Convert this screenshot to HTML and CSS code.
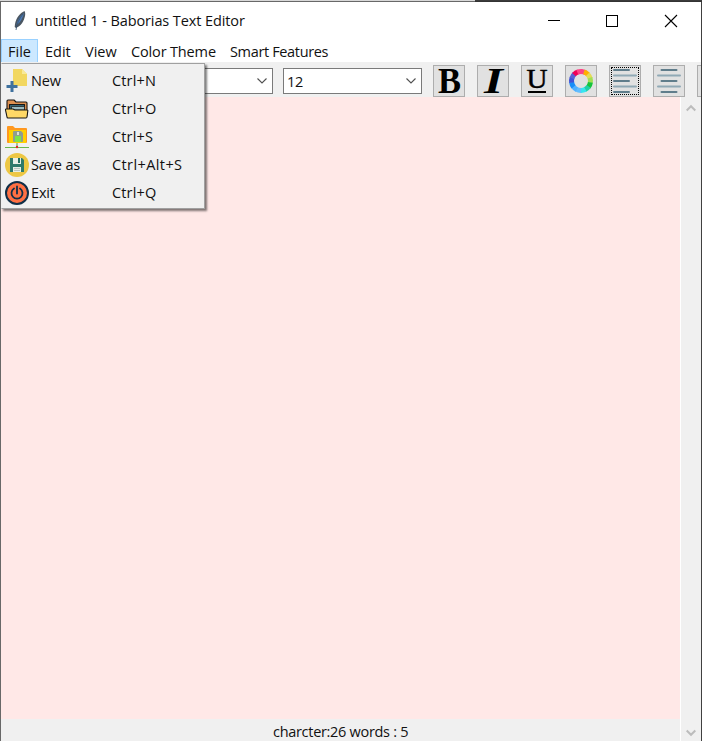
FILE: index.html
```html
<!DOCTYPE html>
<html lang="en">
<head>
<meta charset="utf-8">
<title>untitled 1 - Baborias Text Editor</title>
<link rel="stylesheet" href="styles.css">
</head>
<body>
<div class="window">
  <header class="titlebar">
    <svg class="feather" width="14" height="20" viewBox="0 0 14 20"><path d="M11.5 0C7 2 3 7 2 13l-.3 3L3 17c5-2 8-7 9-12 .4-2 .2-4-.5-5z" fill="#4a5662"/><path d="M11 2C7 5 4 10 3.500 14 8 11 10 6 11 2z" fill="#4b7ab5"/><path d="M10 3C6 8 4 12 3 19" stroke="#35506f" stroke-width=".8" fill="none"/></svg>
    <span class="title">untitled 1 - Baborias Text Editor</span>
    <svg class="controls" width="130" height="14" viewBox="0 0 130 14" fill="none" stroke="#000" shape-rendering="crispEdges"><path d="M0 6.500h12M58.500 1.500h11v11h-11z"/><path d="M117 1l12 12M129 1l-12 12" shape-rendering="auto" stroke-width="1.100"/></svg>
  </header>
  <nav class="menubar">
    <span class="active m-file">File</span><span class="m-edit">Edit</span><span class="m-view">View</span><span class="m-color">Color Theme</span><span class="m-smart">Smart Features</span>
  </nav>
  <div class="toolbar">
    <div class="combo font"><svg width="10" height="6" viewBox="0 0 10 6"><path d="M.5.5 5 5 9.500.5"/></svg></div>
    <div class="combo size"><span>12</span><svg width="10" height="6" viewBox="0 0 10 6"><path d="M.5.5 5 5 9.500.5"/></svg></div>
    <div class="tools">
      <button><svg viewBox="0 0 30 30"><text class="glyph bold" x="4" y="27" textLength="23" lengthAdjust="spacingAndGlyphs">B</text></svg></button>
      <button><svg viewBox="0 0 30 30"><text class="glyph italic" x="6" y="27" textLength="19" lengthAdjust="spacingAndGlyphs">I</text></svg></button>
      <button><svg viewBox="0 0 30 30"><text class="glyph underline" x="4.500" y="22" textLength="21" lengthAdjust="spacingAndGlyphs">U</text><path d="M6 26h18" stroke="#000" stroke-width="2"/></svg></button>
      <button><svg viewBox="0 0 30 30"><g fill="none" stroke-width="5" transform="rotate(-90 15 15)"><g stroke-dasharray="5.100 55">
        <circle cx="15" cy="15" r="9.500" stroke="#f74b86"/><circle cx="15" cy="15" r="9.500" stroke="#ffb000" transform="rotate(18 15 15)"/><circle cx="15" cy="15" r="9.500" stroke="#e4dc55" transform="rotate(45 15 15)"/><circle cx="15" cy="15" r="9.500" stroke="#a2df55" transform="rotate(70 15 15)"/><circle cx="15" cy="15" r="9.500" stroke="#16c43c" transform="rotate(98 15 15)"/><circle cx="15" cy="15" r="9.500" stroke="#20d0a5" transform="rotate(126 15 15)"/><circle cx="15" cy="15" r="9.500" stroke="#38e4ef" transform="rotate(152 15 15)"/><circle cx="15" cy="15" r="9.500" stroke="#62bdff" transform="rotate(180 15 15)"/><circle cx="15" cy="15" r="9.500" stroke="#4eb0ff" transform="rotate(206 15 15)"/><circle cx="15" cy="15" r="9.500" stroke="#188df8" transform="rotate(232 15 15)"/><circle cx="15" cy="15" r="9.500" stroke="#4052d7" transform="rotate(260 15 15)"/><circle cx="15" cy="15" r="9.500" stroke="#5861d5" transform="rotate(287 15 15)"/><circle cx="15" cy="15" r="9.500" stroke="#f00056" transform="rotate(312 15 15)"/><circle cx="15" cy="15" r="9.500" stroke="#ff4387" transform="rotate(337 15 15)"/></g></g></svg></button>
      <button class="focused"><svg viewBox="0 0 30 30"><path class="dark" d="M4 4h15M4 15h15M4 26h15"/><path class="light" d="M4 9.500h22M4 20.500h22"/></svg></button>
      <button><svg viewBox="0 0 30 30"><path class="dark" d="M7.500 4h15M7.500 15h15M7.500 26h15"/><path class="light" d="M4 9.500h22M4 20.500h22"/></svg></button>
      <button></button>
    </div>
  </div>
  <div class="workspace">
    <main class="document"><div class="page"></div><footer><span>charcter:26 words : 5</span></footer></main>
    <div class="scrollbar"><svg width="10" height="8" viewBox="0 0 10 8"><path d="M.7 6.500 5 2.200l4.300 4.300"/></svg><svg width="10" height="8" viewBox="0 0 10 8"><path d="M.7 1.500 5 5.800l4.300-4.300"/></svg></div>
  </div>
  <div class="dropdown">
    <div class="item"><svg viewBox="0 0 24 24"><path d="M8 0h9l5 5v12H8z" fill="#f2d760"/><path d="M17 0v5h5z" fill="#f8e99a"/><path d="M7 12v11M1.500 17.500h11" stroke="#3f719e" stroke-width="3"/></svg><span>New</span><kbd>Ctrl+N</kbd></div>
    <div class="item"><svg viewBox="0 0 24 24"><g stroke="#181715" stroke-width="1.100" stroke-linejoin="round"><path d="M2 17V4q0-1 1-1h6l2 2h10q1 0 1 1v12z" fill="#df9150"/><path d="M4.500 13V7.500h15V13z" fill="#376573"/><path d="M6.500 13V9.500h13V13z" fill="#9ebdc2" stroke-width=".7"/><path d="M1 12h7l2 1h12q1 0 .8 1L22 20q-.2 1-1 1H3q-1 0-1-1L.5 13q-.2-1 .5-1z" fill="#ffd866"/></g></svg><span>Open</span><kbd>Ctrl+O</kbd></div>
    <div class="item"><svg viewBox="0 0 24 24"><path d="M2 17V2q0-1 1-1h5l2 2h11q1 0 1 1v13q0 1-1 1H3q-1 0-1-1z" fill="#ff981f"/><path d="M4 5h17v13H4z" fill="#ffd000"/><path d="M8 7q0-1 1-1h7l2 2v8q0 1-1 1H9q-1 0-1-1z" fill="#8f9d91"/><path d="M10 11h6v6h-6z" fill="#7ce34b"/><path d="M12 7h2v3h-2z" fill="#d8e2d6"/><path d="M0 22.500h24" stroke="#69b84d"/><path d="M12 18v3" stroke="#5c9f45"/><circle cx="12" cy="22" r="1.200" fill="#e82b20"/></svg><span>Save</span><kbd>Ctrl+S</kbd></div>
    <div class="item"><svg viewBox="0 0 24 24"><circle cx="12" cy="12" r="12" fill="#edc744"/><path d="M5 5h12l2 2v12H5z" fill="#2f7a6b"/><path d="M8 5h8v6H8zM8 14h8v5H8z" fill="#e8eee6"/><path d="M13 5h2v5h-2z" fill="#226e60"/><path d="M9 15.500h6M9 17.500h6" stroke="#a5b4ae" stroke-width=".7"/></svg><span>Save as</span><kbd class="wide">Ctrl+Alt+S</kbd></div>
    <div class="item"><svg viewBox="0 0 24 24"><circle cx="12" cy="12" r="11" fill="#ff7043" stroke="#102f48" stroke-width="2"/><path d="M9 7.500a5.500 5.500 0 1 0 6 0M12 5.500v7" fill="none" stroke="#102f48" stroke-width="1.800" stroke-linecap="round"/></svg><span>Exit</span><kbd>Ctrl+Q</kbd></div>
  </div>
</div>
</body>
</html>
```
FILE: styles.css
```css
* { box-sizing: border-box; }
body { margin: 0; overflow: hidden; color: #111; font: 14.5px/20px "Open Sans", "Noto Sans", sans-serif; }
.window { position: relative; width: 702px; height: 741px; padding: 2px 1px 0; overflow: hidden; background: linear-gradient(90deg, #686868 0 1px, #fff 1px 701px, #404040 701px); display: flex; flex-direction: column; }
.window::before { content: ""; position: absolute; inset: 0 0 auto; height: 2px; background: linear-gradient(90deg, #d8d8d8 0 475px, #3b3b3b 475px) 0 0 / 100% 1px no-repeat, linear-gradient(90deg, #686868 0 475px, #333 475px); }
.titlebar { height: 37px; flex: none; display: flex; align-items: center; padding: 0 23px 0 12px; background: #fff; }
.feather { margin-right: 8px; }
.title { white-space: nowrap; letter-spacing: -.1px; }
.controls { margin-left: auto; }
.menubar { height: 23px; flex: none; display: flex; background: #fff; white-space: nowrap; }
.menubar span { padding: 3px 0 0 7px; height: 24px; }
.menubar .active { border: 1px solid #99d1ff; background: #cce8ff; padding: 2px 0 0 6px; }
.m-file { width: 37px; }
.m-edit { width: 40px; }
.m-view { width: 46px; }
.m-color { width: 99px; letter-spacing: -.15px; }
.m-smart { letter-spacing: -.35px; }
.toolbar { height: 35px; flex: none; display: flex; background: #f0f0f0; padding: 3px 0 0 132px; overflow: hidden; }
.combo { height: 26px; margin-top: 3px; border: 1px solid #7a7a7a; background: #fff; display: flex; align-items: center; justify-content: flex-end; padding: 0 5px 0 3px; flex: none; }
.combo.font { width: 140px; }
.combo.size { width: 139px; margin-left: 10px; justify-content: space-between; }
.combo span { padding-top: 2px; letter-spacing: -.2px; }
.combo path { fill: none; stroke: #505050; stroke-width: 1.1; }
.tools { display: flex; gap: 12px; margin-left: 11px; }
.tools button { width: 32px; height: 32px; flex: none; border: 1px solid #adadad; background: #e1e1e1; padding: 0; position: relative; }
.tools svg { display: block; width: 30px; height: 30px; overflow: visible; }
.glyph { font-family: "Liberation Serif", serif; fill: #000; }
.bold { font-size: 36px; font-weight: bold; }
.italic { font-size: 36px; font-weight: bold; font-style: italic; }
.underline { font-size: 28px; stroke: #000; stroke-width: .5px; }
.dark, .light { fill: none; stroke-width: 2; stroke-linecap: round; stroke: #607d8b; }
.light { stroke: #90a9b5; }
.focused::after { content: ""; position: absolute; inset: 1px; border: 1px dotted #000; }
.workspace { flex: 1; display: flex; min-height: 0; }
.document { width: 679px; display: flex; flex-direction: column; }
.page { height: 622px; background: #ffe8e7; }
footer { height: 22px; background: #f0f0f0; padding: 3px 0 0 272px; white-space: nowrap; letter-spacing: -.3px; }
.scrollbar { width: 21px; border-left: 1px solid #fff; background: #f0f0f0; display: flex; flex-direction: column; align-items: center; justify-content: space-between; padding: 7px 0 4px; }
.scrollbar path { fill: none; stroke: #bcbcbc; stroke-width: 2; }
.dropdown { position: absolute; left: 1px; top: 63px; width: 204px; height: 146px; padding: 3px 0; border: 1px solid #a0a0a0; border-left-color: #f0f0f0; background: #f0f0f0; box-shadow: 2px 2px 2px rgba(0, 0, 0, .5); }
.item { height: 28px; display: grid; grid-template-columns: 24px 83px 1fr; padding-left: 3px; align-items: center; white-space: nowrap; }
.item svg { width: 24px; height: 24px; }
.item span { padding-left: 2px; letter-spacing: -.15px; }
.item kbd { font: inherit; letter-spacing: .15px; }
.item .wide { letter-spacing: .4px; }
```
